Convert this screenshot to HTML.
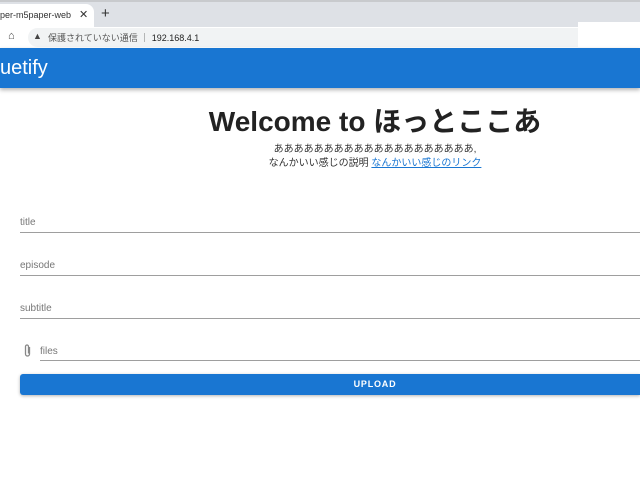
<!DOCTYPE html>
<html><head><meta charset="utf-8"><style>
body{margin:0;width:640px;height:480px;overflow:hidden;background:#fff;font-family:"Liberation Sans","Noto Sans CJK JP",sans-serif;position:relative}
.a{position:absolute}
.lbl{position:absolute;left:20px;font-size:10px;color:#777}
.ln{position:absolute;left:20px;right:0;height:1px;background:#9e9e9e}
</style></head><body>
<div class="a" style="left:0;top:0;width:640px;height:27px;background:#dee1e6;border-top:2px solid #c8cacd;box-sizing:border-box"></div>
<div class="a" style="left:0;top:4px;width:94px;height:24px;background:#fff;border-radius:0 8px 0 0"></div>
<div class="a" style="left:0;top:10px;font-size:9px;color:#333">per-m5paper-web</div>
<div class="a" style="left:79px;top:8px;font-size:11px;color:#333">✕</div>
<div class="a" style="left:101px;top:5px;font-size:15px;color:#333">+</div>
<div class="a" style="left:0;top:27px;width:640px;height:21px;background:#fff"></div>
<div class="a" style="left:8px;top:30px;font-size:11px;color:#444">⌂</div>
<div class="a" style="left:28px;top:28px;width:560px;height:19px;background:#f1f3f4;border-radius:10px"></div>
<div class="a" style="left:33px;top:31px;font-size:9px;color:#444">▲</div>
<div class="a" style="left:48px;top:31px;font-size:9px;color:#555">保護されていない通信 ｜ <span style="color:#222">192.168.4.1</span></div>
<div class="a" style="left:578px;top:22px;width:62px;height:27px;background:#fff"></div>
<div class="a" style="left:0;top:48px;width:640px;height:40px;background:#1976d2;box-shadow:0 2px 4px rgba(0,0,0,.3)"></div>
<div class="a" style="left:0;top:57px;font-size:20px;color:#fff;font-weight:500">uetify</div>
<div class="a" style="left:110px;width:530px;top:100px;text-align:center;font-size:28px;font-weight:bold;color:#222">Welcome to ほっとここあ</div>
<div class="a" style="left:110px;width:530px;top:143px;text-align:center;font-size:10px;line-height:14px;color:#333">ああああああああああああああああああああ,<br>なんかいい感じの説明 <span style="color:#1976d2;text-decoration:underline">なんかいい感じのリンク</span></div>
<div class="lbl" style="top:217px">title</div><div class="ln" style="top:232px"></div>
<div class="lbl" style="top:260px">episode</div><div class="ln" style="top:275px"></div>
<div class="lbl" style="top:303px">subtitle</div><div class="ln" style="top:318px"></div>
<svg class="a" style="left:23px;top:344px" width="9" height="14" viewBox="0 0 9 14"><path d="M6.5 3v7a2 2 0 0 1-4 0V2.5a1.5 1.5 0 0 1 3 0V9.5" fill="none" stroke="#888" stroke-width="1.3"/></svg>
<div class="lbl" style="left:40px;top:346px">files</div><div class="ln" style="left:40px;top:360px"></div>
<div class="a" style="left:20px;right:0;top:374px;height:21px;background:#1976d2;border-radius:3px 0 0 3px;box-shadow:0 1px 3px rgba(0,0,0,.3);color:#fff;font-size:9px;font-weight:bold;letter-spacing:.8px;text-align:center;line-height:21px;padding-left:90px">UPLOAD</div>
</body></html>
